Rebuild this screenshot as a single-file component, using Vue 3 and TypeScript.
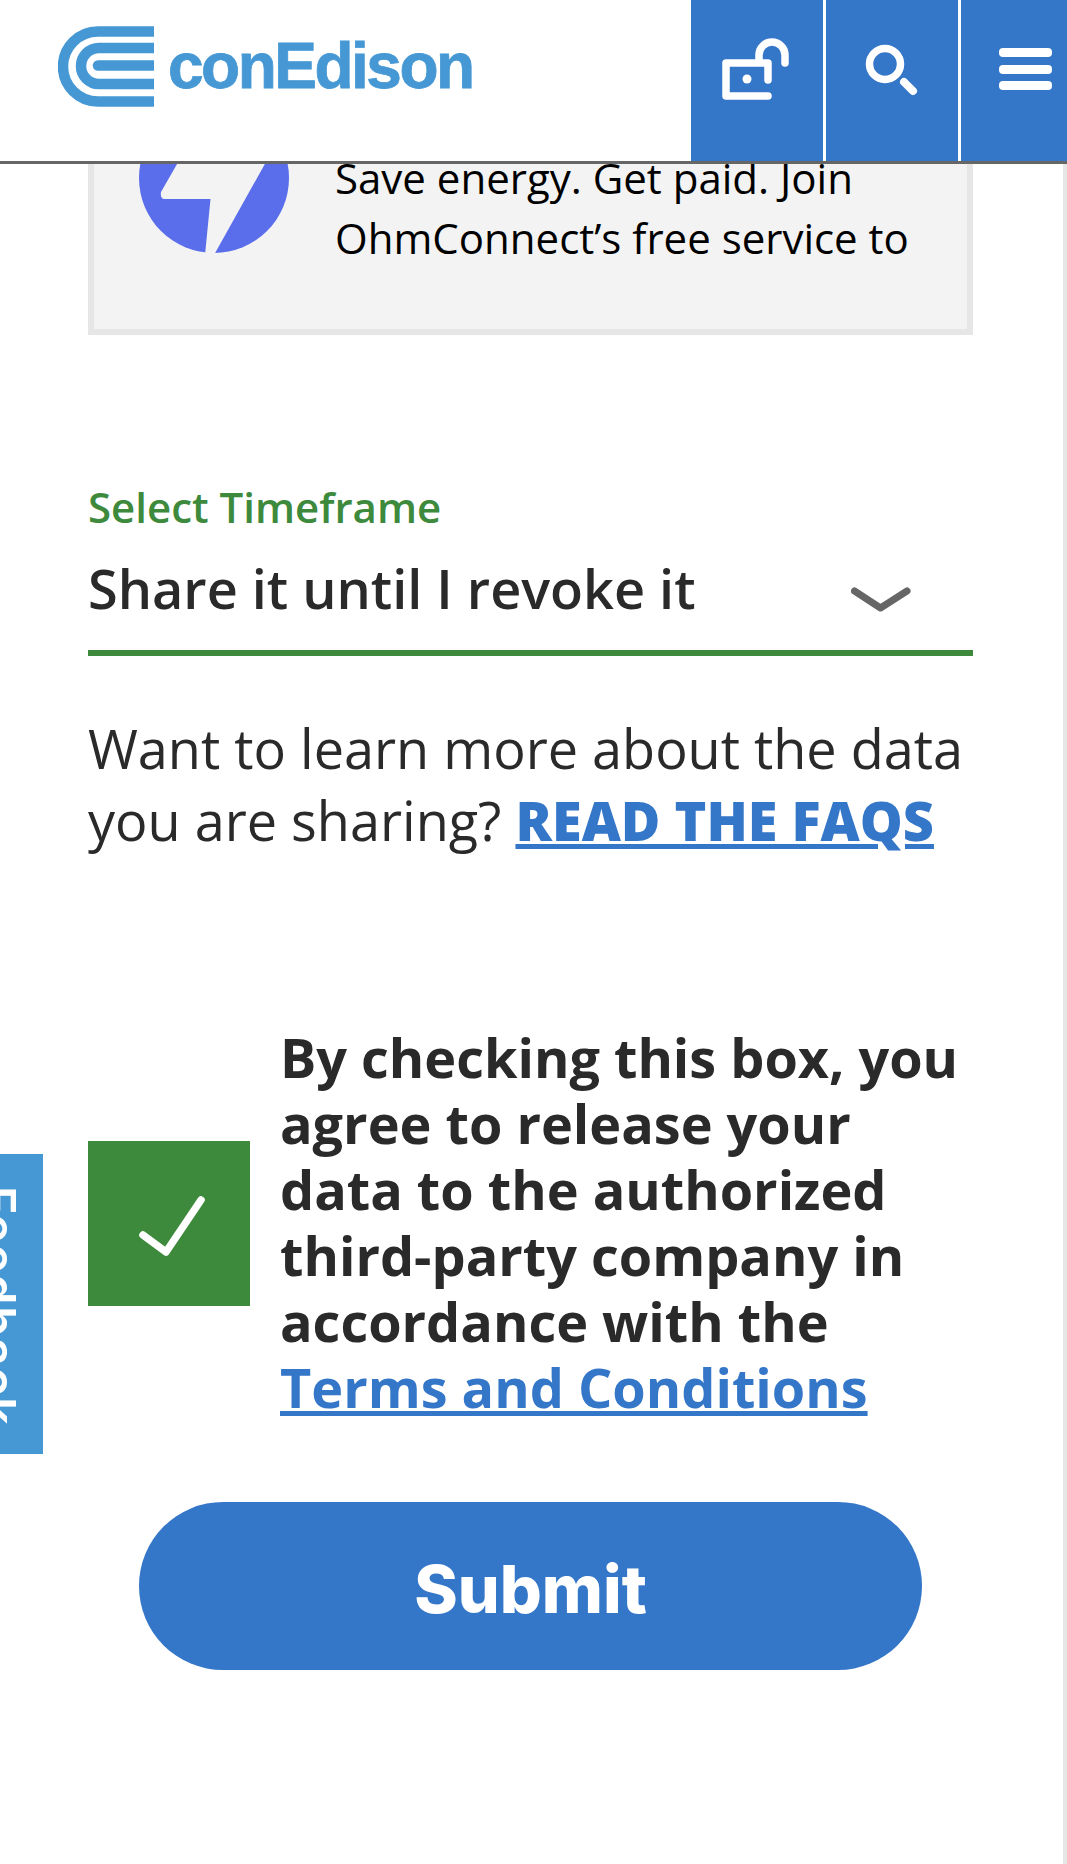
<template>
  <div class="page">
    <header class="top-bar">
      <a class="logo">
        <svg class="logo-mark" viewBox="0 0 96 82" width="96" height="82" aria-hidden="true">
          <g fill="none" stroke="#4698d4" stroke-width="10.5">
            <path d="M96 5.500H40A35 35 0 0 0 40 75.500H96" />
            <path d="M96 22H41A18 18 0 0 0 41 58H96" />
            <path d="M110 39.500H40" stroke-linecap="round" />
          </g>
        </svg>
        <span class="logo-text">conEdison</span>
      </a>
      <nav class="top-actions">
        <button class="top-btn lock-btn" aria-label="Log in">
          <svg viewBox="0 0 90 70" width="90" height="70" aria-hidden="true">
            <g fill="none" stroke="#fff" stroke-width="7.500" stroke-linecap="round" stroke-linejoin="round">
              <path d="M63 42V25H21V58H63" />
              <path d="M54 22V17A13 13 0 0 1 80 17V25" />
            </g>
            <circle cx="42" cy="41" r="4.500" fill="#fff" />
          </svg>
        </button>
        <button class="top-btn" aria-label="Search">
          <svg viewBox="0 0 70 70" width="70" height="70" aria-hidden="true">
            <g fill="none" stroke="#fff" stroke-width="7.500" stroke-linecap="round">
              <circle cx="28" cy="26" r="15.500" />
              <path d="M47 44L56 53" stroke-width="8" />
            </g>
          </svg>
        </button>
        <button class="top-btn menu-btn" aria-label="Menu">
          <span v-for="n in 3" :key="n" class="menu-bar"></span>
        </button>
      </nav>
    </header>

    <main class="content">
      <section class="offer-card">
        <svg class="offer-icon" viewBox="0 0 150 150" width="150" height="150" aria-hidden="true">
          <circle cx="75" cy="75" r="75" fill="#5a6eec" />
          <path d="M73 0L22 89Q21 95 25 96H71.500L66 152H75L126 60.700L160 0Z" fill="#f3f3f3" />
        </svg>
        <p class="offer-text">Save energy. Get paid. Join OhmConnect’s free service to</p>
      </section>

      <section class="timeframe">
        <label class="field-label">Select Timeframe</label>
        <div class="select-row">
          <span class="select-value">{{ timeframe }}</span>
          <svg class="chevron" viewBox="0 0 60 26" width="60" height="26" aria-hidden="true">
            <path d="M3.500 5L29.500 22L56 5" fill="none" stroke="#666" stroke-width="7" stroke-linejoin="round" stroke-linecap="round" />
          </svg>
        </div>
      </section>

      <p class="learn-more">
        Want to learn more about the data you are sharing?
        <a class="faq-link">READ THE FAQS</a>
      </p>

      <section class="agree">
        <span class="check-box">
          <svg viewBox="0 0 162 165" width="162" height="165" aria-hidden="true">
            <path d="M55 94L78 111L113 59" fill="none" stroke="#fff" stroke-width="7.500" stroke-linecap="round" stroke-linejoin="round" />
          </svg>
        </span>
        <p class="agree-text">
          By checking this box, you agree to release your data to the authorized third-party company in accordance with the
          <a class="terms-link">Terms and Conditions</a>
        </p>
      </section>

      <div class="submit-row">
        <button class="submit-btn">Submit</button>
      </div>
    </main>

    <div class="feedback-tab"><span class="feedback-label">Feedback</span></div>
    <div class="scroll-track"></div>
  </div>
</template>

<script setup lang="ts">
import { ref } from 'vue'

const timeframe = ref('Share it until I revoke it')
</script>

<style>
html,
body {
  margin: 0;
  background: #fff;
}
</style>

<style scoped>
.page {
  position: relative;
  width: 1067px;
  height: 1864px;
  overflow: hidden;
  background: #fff;
  font-family: "Open Sans", "Liberation Sans", sans-serif;
  color: #2a2a2a;
}

.top-bar {
  position: relative;
  z-index: 2;
  display: flex;
  justify-content: space-between;
  height: 161px;
  background: #fff;
  border-bottom: 3px solid #666;
}

.logo {
  display: flex;
  align-items: flex-start;
  gap: 14px;
  padding: 26px 0 0 58px;
}

.logo-text {
  margin-top: 8px;
  font-family: "Liberation Sans", Arial, sans-serif;
  font-size: 64px;
  font-weight: 700;
  line-height: 64px;
  letter-spacing: -2.5px;
  color: #4698d4;
  -webkit-text-stroke: 0.8px #4698d4;
}

.top-actions {
  display: flex;
  gap: 3px;
}

.top-btn {
  display: flex;
  align-items: flex-start;
  width: 132px;
  height: 161px;
  padding: 38px 0 0 31px;
  border: 0;
  background: #3476c8;
}

.lock-btn {
  padding-left: 14px;
}

.menu-btn {
  flex-direction: column;
  gap: 7.5px;
  width: 106px;
  padding: 48px 0 0 38px;
}

.menu-bar {
  display: block;
  width: 53px;
  height: 9px;
  border-radius: 4px;
  background: #fff;
}

.content {
  width: 885px;
  margin-left: 88px;
}

.offer-card {
  display: flex;
  align-items: flex-start;
  gap: 46px;
  height: 241px;
  margin-top: -70px;
  padding: 3px 40px 0 45px;
  box-sizing: border-box;
  background: #f3f3f3;
  border: 6px solid #e6e6e6;
}

.offer-icon {
  flex: none;
}

.offer-text {
  margin: 45px 0 0;
  font-size: 42px;
  line-height: 60px;
  color: #000;
}

.timeframe {
  margin-top: 147px;
}

.field-label {
  display: block;
  font-size: 42px;
  font-weight: 600;
  line-height: 50px;
  color: #3d8a3c;
}

.select-row {
  display: flex;
  justify-content: space-between;
  align-items: flex-start;
  height: 99px;
  padding: 19px 62px 0 0;
  border-bottom: 6px solid #3d8a3c;
}

.select-value {
  font-size: 54px;
  font-weight: 600;
  line-height: 74px;
}

.chevron {
  margin-top: 35px;
}

.learn-more {
  margin: 56px 0 0;
  font-size: 54px;
  line-height: 72px;
}

.faq-link {
  font-weight: 800;
  color: #3476c8;
  text-decoration: underline;
}

.agree {
  display: flex;
  align-items: center;
  gap: 30px;
  margin-top: 168px;
}

.check-box {
  flex: none;
  display: block;
  width: 162px;
  height: 165px;
  background: #3d8a3c;
}

.check-box svg {
  display: block;
}

.agree-text {
  margin: 0 0 3px;
  font-size: 54px;
  font-weight: 700;
  line-height: 66px;
}

.terms-link {
  color: #3476c8;
  text-decoration: underline;
}

.submit-row {
  display: flex;
  justify-content: center;
  margin-top: 79px;
}

.submit-btn {
  width: 783px;
  height: 168px;
  padding: 6px 0 0;
  border: 0;
  border-radius: 84px;
  background: #3476c8;
  color: #fff;
  font-family: Inter, "Liberation Sans", sans-serif;
  font-size: 66px;
  font-weight: 800;
}

.feedback-tab {
  position: absolute;
  top: 1154px;
  left: 0;
  width: 43px;
  height: 300px;
  overflow: hidden;
  background: #4698d4;
}

.feedback-label {
  position: absolute;
  top: 32px;
  left: 22px;
  transform-origin: 0 0;
  transform: rotate(90deg);
  font-family: Inter, "Liberation Sans", sans-serif;
  font-size: 48px;
  font-weight: 600;
  line-height: 48px;
  letter-spacing: 1.7px;
  color: #fff;
  white-space: nowrap;
  filter: blur(0.6px);
}

.scroll-track {
  position: absolute;
  top: 164px;
  right: 0;
  bottom: 0;
  width: 4px;
  background: #e6e6e6;
}
</style>
